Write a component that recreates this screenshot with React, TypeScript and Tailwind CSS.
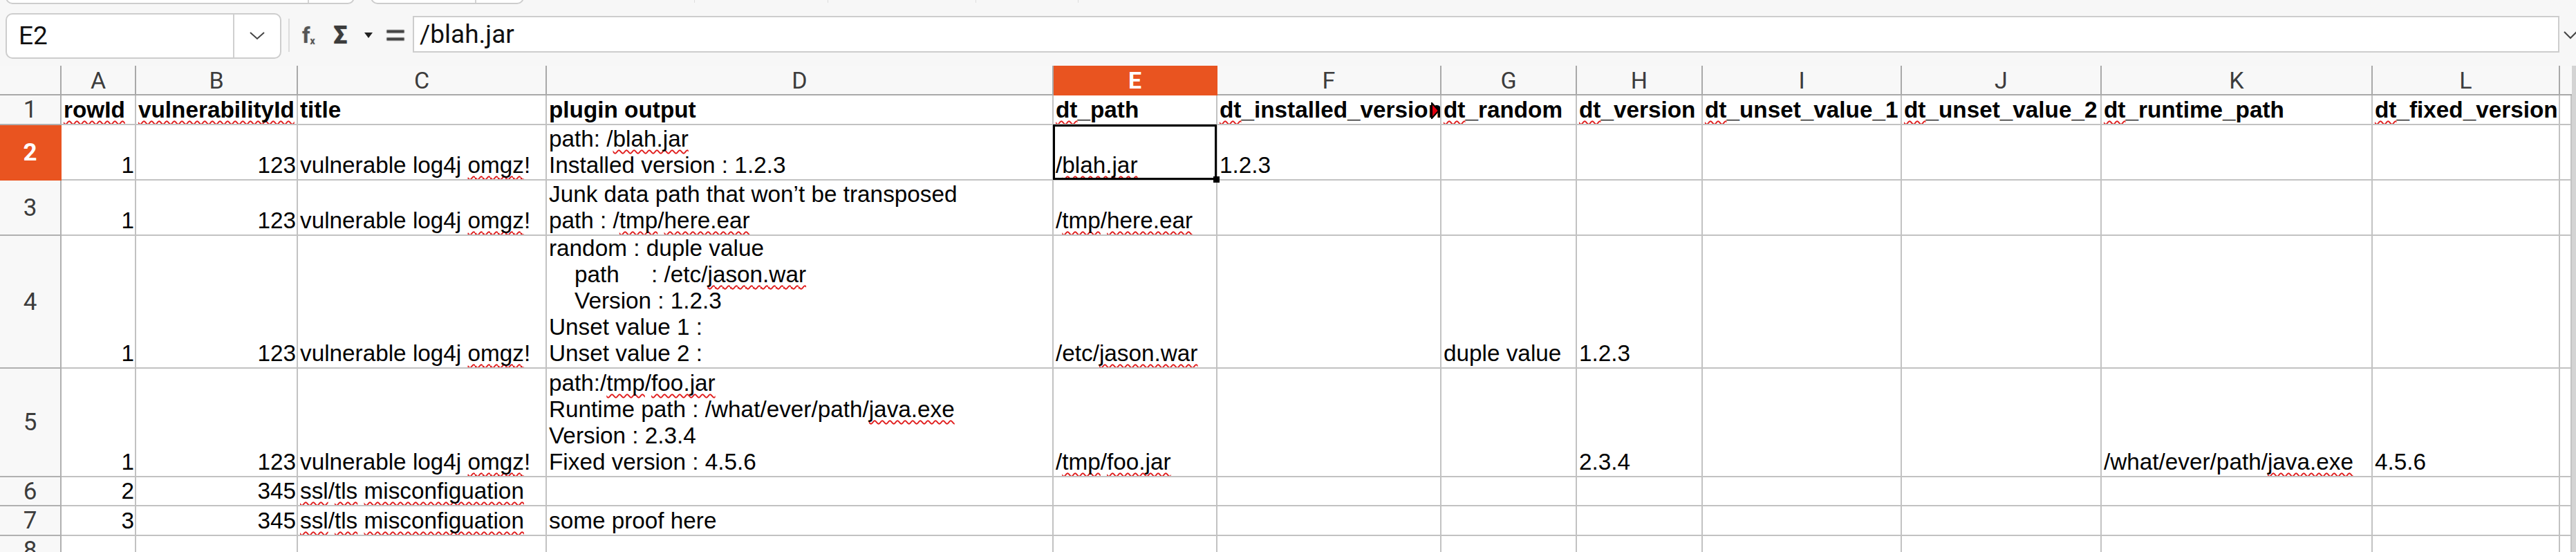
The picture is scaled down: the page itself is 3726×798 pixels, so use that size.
import React, { ReactNode } from 'react';

const Sq = ({ children }: { children: ReactNode }) => (
  <span className="underline decoration-wavy decoration-[#e01b1b] decoration-[2px] underline-offset-[4px] [text-decoration-skip-ink:none]">
    {children}
  </span>
);

type Cell = { c?: ReactNode; r?: boolean; b?: boolean; sel?: boolean; clip?: boolean };

const title = (
  <>
    vulnerable log4j <Sq>omgz</Sq>!
  </>
);
const ssl = (
  <>
    <Sq>ssl</Sq>/<Sq>tls</Sq> <Sq>misconfiguation</Sq>
  </>
);

const lines = (...ls: ReactNode[]) => (
  <>
    {ls.map((l, i) => (
      <div key={i} className="whitespace-pre">
        {l}
      </div>
    ))}
  </>
);

const headers = ['', 'A', 'B', 'C', 'D', 'E', 'F', 'G', 'H', 'I', 'J', 'K', 'L', ''];

const rows: { label: string; h: string; cells: Cell[]; active?: boolean }[] = [
  {
    label: '1',
    h: 'h-[43px]',
    cells: [
      { c: <Sq>rowId</Sq>, b: true },
      { c: <Sq>vulnerabilityId</Sq>, b: true },
      { c: 'title', b: true },
      { c: 'plugin output', b: true },
      { c: <><Sq>dt</Sq>_path</>, b: true },
      { c: <><Sq>dt</Sq>_installed_version</>, b: true, clip: true },
      { c: <><Sq>dt</Sq>_random</>, b: true },
      { c: <><Sq>dt</Sq>_version</>, b: true },
      { c: <><Sq>dt</Sq>_unset_value_1</>, b: true },
      { c: <><Sq>dt</Sq>_unset_value_2</>, b: true },
      { c: <><Sq>dt</Sq>_runtime_path</>, b: true },
      { c: <><Sq>dt</Sq>_fixed_version</>, b: true },
      {},
    ],
  },
  {
    label: '2',
    h: 'h-[80px]',
    active: true,
    cells: [
      { c: '1', r: true },
      { c: '123', r: true },
      { c: title },
      { c: lines(<>path: /<Sq>blah.jar</Sq></>, 'Installed version : 1.2.3') },
      { c: <>/<Sq>blah.jar</Sq></>, sel: true },
      { c: '1.2.3' },
      {}, {}, {}, {}, {}, {}, {},
    ],
  },
  {
    label: '3',
    h: 'h-[80px]',
    cells: [
      { c: '1', r: true },
      { c: '123', r: true },
      { c: title },
      { c: lines('Junk data path that won\u2019t be transposed', <>path : /<Sq>tmp</Sq>/<Sq>here.ear</Sq></>) },
      { c: <>/<Sq>tmp</Sq>/<Sq>here.ear</Sq></> },
      {}, {}, {}, {}, {}, {}, {}, {},
    ],
  },
  {
    label: '4',
    h: 'h-[192px]',
    cells: [
      { c: '1', r: true },
      { c: '123', r: true },
      { c: title },
      {
        c: lines(
          'random : duple value',
          <>{'    path     : /etc/'}<Sq>jason.war</Sq></>,
          '    Version : 1.2.3',
          'Unset value 1 :',
          'Unset value 2 :'
        ),
      },
      { c: <>/etc/<Sq>jason.war</Sq></> },
      {},
      { c: 'duple value' },
      { c: '1.2.3' },
      {}, {}, {}, {}, {},
    ],
  },
  {
    label: '5',
    h: 'h-[157px]',
    cells: [
      { c: '1', r: true },
      { c: '123', r: true },
      { c: title },
      {
        c: lines(
          <>path:/<Sq>tmp</Sq>/<Sq>foo.jar</Sq></>,
          <>Runtime path : /what/ever/path/<Sq>java.exe</Sq></>,
          'Version : 2.3.4',
          'Fixed version : 4.5.6'
        ),
      },
      { c: <>/<Sq>tmp</Sq>/<Sq>foo.jar</Sq></> },
      {},
      {},
      { c: '2.3.4' },
      {},
      {},
      { c: <>/what/ever/path/<Sq>java.exe</Sq></> },
      { c: '4.5.6' },
      {},
    ],
  },
  {
    label: '6',
    h: 'h-[42px]',
    cells: [
      { c: '2', r: true },
      { c: '345', r: true },
      { c: ssl },
      {}, {}, {}, {}, {}, {}, {}, {}, {}, {},
    ],
  },
  {
    label: '7',
    h: 'h-[43px]',
    cells: [
      { c: '3', r: true },
      { c: '345', r: true },
      { c: ssl },
      { c: 'some proof here' },
      {}, {}, {}, {}, {}, {}, {}, {}, {},
    ],
  },
  {
    label: '8',
    h: 'h-[43px]',
    cells: [{}, {}, {}, {}, {}, {}, {}, {}, {}, {}, {}, {}, {}],
  },
];

const GRID =
  'grid grid-cols-[89px_108px_234px_360px_733px_237px_324px_196px_182px_288px_289px_392px_271px_1fr] grid-rows-[100%]';

function DataCell({ cell }: { cell: Cell }) {
  return (
    <div className="relative border-r-2 border-b-2 border-[#c2c2c2] bg-white min-w-0 min-h-0">
      <div
        className={`absolute inset-0 overflow-hidden flex flex-col justify-end pb-[1px] whitespace-nowrap text-[33.3px] leading-[38px] text-black font-['Liberation_Sans',Arial,sans-serif] ${
          cell.r ? 'items-end pr-[1px]' : 'items-start pl-[3px]'
        } ${cell.b ? 'font-bold' : ''}`}
      >
        <div>{cell.c}</div>
      </div>
      {cell.clip && (
        <svg
          className="absolute right-[1px] top-[10px]"
          width="12"
          height="24"
          viewBox="0 0 12 24"
        >
          <polygon points="1,1 11,12 1,23" fill="#e3000f" stroke="#000" strokeWidth="2" />
        </svg>
      )}
      {cell.sel && (
        <>
          <div className="absolute -left-[1px] -top-[1px] -right-[1px] -bottom-[1px] border-[3px] border-black z-10" />
          <div className="absolute -right-[5px] -bottom-[5px] w-[9px] h-[9px] bg-black z-10" />
        </>
      )}
    </div>
  );
}

export default function App() {
  return (
    <div className="w-[3726px] h-[798px] overflow-hidden bg-[#f7f7f7] flex flex-col font-['Roboto',sans-serif]">
      {/* toolbar remnants */}
      <div className="h-[6px] shrink-0 relative overflow-hidden">
        <div className="absolute left-[8px] bottom-0 w-[505px] h-[40px] rounded-b-[10px] border-2 border-[#cdcdcd] bg-white flex">
          <div className="w-[437px] border-r-2 border-[#d4d4d4]" />
        </div>
        <div className="absolute left-[536px] bottom-0 w-[222px] h-[40px] rounded-b-[10px] border-2 border-[#cdcdcd] bg-white flex">
          <div className="w-[151px] border-r-2 border-[#d4d4d4]" />
        </div>
        <div className="absolute left-[1004px] top-0 w-[1px] h-[4px] bg-[#dedede]" />
        <div className="absolute left-[1197px] top-0 w-[1px] h-[4px] bg-[#dedede]" />
        <div className="absolute left-[1411px] top-0 w-[1px] h-[4px] bg-[#dedede]" />
        <div className="absolute left-[1559px] top-0 w-[1px] h-[4px] bg-[#dedede]" />
      </div>

      {/* formula bar */}
      <div className="h-[89px] shrink-0 flex items-center">
        <div className="ml-[8px] mt-[3px] w-[399px] h-[66px] rounded-[10px] border-2 border-[#cdcdcd] bg-white flex items-stretch">
          <div className="w-[327px] flex items-center pl-[17px] text-[37px] text-[#111]">E2</div>
          <div className="flex-1 border-l-2 border-[#d0d0d0] flex items-center justify-center">
            <svg width="22" height="12" viewBox="0 0 22 12">
              <polyline points="1,1 11,10 21,1" fill="none" stroke="#444" strokeWidth="2" />
            </svg>
          </div>
        </div>
        <div className="ml-[10px] w-[2px] h-[48px] bg-[#dcdcdc]" />
        <div className="ml-[18px] w-[28px] flex items-end text-[#555] [text-shadow:0_0_2px_#c0c0c0] leading-none">
          <span className="text-[32px] font-bold">f</span>
          <span className="text-[14px] font-bold mb-[1px]">x</span>
        </div>
        <div className="ml-[17px] w-[26px] text-[36px] font-black leading-none text-[#3c3c3c] [text-shadow:0_0_2px_#c0c0c0]">
          Σ
        </div>
        <svg className="ml-[19px]" width="12" height="8" viewBox="0 0 12 8">
          <polygon points="0,0 12,0 6,8" fill="#222" />
        </svg>
        <svg className="ml-[19px]" width="28" height="18" viewBox="0 0 28 18">
          <rect x="1" y="1" width="26" height="5" rx="1" fill="#444" stroke="#c8c8c8" strokeWidth="1" />
          <rect x="1" y="12" width="26" height="5" rx="1" fill="#444" stroke="#c8c8c8" strokeWidth="1" />
        </svg>
        <div className="ml-[11px] flex-1 h-[53px] border-2 border-[#cdcdcd] bg-white flex items-center pl-[8px] text-[37px] text-[#111] mb-[2px]">
          /blah.jar
        </div>
        <svg className="ml-[6px] shrink-0" width="18" height="12" viewBox="0 0 18 12">
          <polyline points="1,1 10,10 19,1" fill="none" stroke="#444" strokeWidth="2" />
        </svg>
      </div>

      {/* sheet */}
      <div className="flex-1 flex min-h-0 overflow-hidden">
        <div className="flex-1 flex flex-col">
          {/* column header */}
          <div className={`${GRID} h-[43px] shrink-0 bg-[#f8f8f8]`}>
            {headers.map((h, i) => (
              <div
                key={i}
                className={`flex items-center justify-center text-[34px] leading-none border-b-2 ${
                  i === 13 ? '' : 'border-r-2'
                } ${
                  h === 'E'
                    ? 'bg-[#e95420] text-white font-bold border-[#e95420]'
                    : 'text-[#3c3c3c] border-[#a9a9a9]'
                }`}
              >
                {h}
              </div>
            ))}
          </div>
          {rows.map((row) => (
            <div key={row.label} className={`${GRID} ${row.h} shrink-0`}>
              <div
                className={`flex items-center justify-center text-[35px] leading-none border-r-2 border-b-2 ${
                  row.active
                    ? 'bg-[#e95420] text-white font-bold border-[#e95420]'
                    : 'bg-[#f8f8f8] text-[#3c3c3c] border-[#b0b0b0]'
                }`}
              >
                {row.label}
              </div>
              {row.cells.map((cell, i) => (
                <DataCell key={i} cell={cell} />
              ))}
            </div>
          ))}
        </div>
        <div className="w-[6px] shrink-0 bg-[#d4d4d4]" />
      </div>
    </div>
  );
}
